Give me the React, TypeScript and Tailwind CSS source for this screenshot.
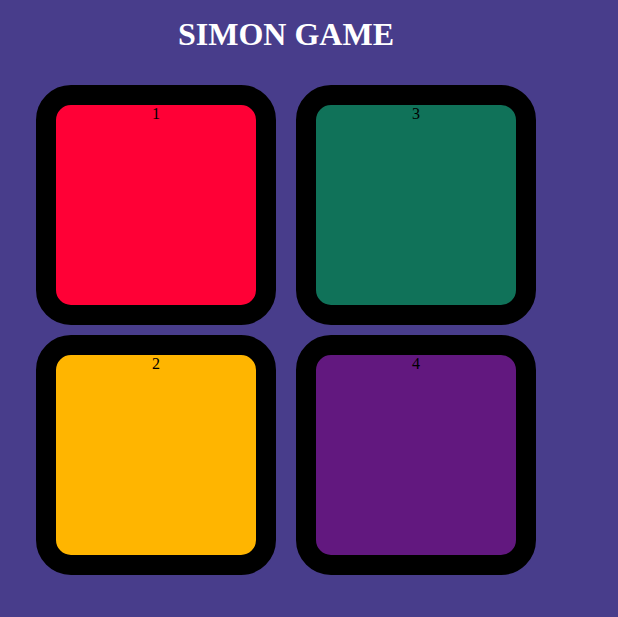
const pads = [
  { n: "1", color: "bg-[#ff0036]" },
  { n: "3", color: "bg-[#107259]" },
  { n: "2", color: "bg-[#ffb500]" },
  { n: "4", color: "bg-[#62187f]" },
];

const App = () => {
  return (
    <div className="min-h-screen w-full bg-[#483d8b] font-['Liberation_Serif',serif]">
      <div className="ml-[36px] w-[500px] pt-[18px]">
        <h1 className="text-center text-[32px] font-bold leading-none text-white">SIMON GAME</h1>
        <div className="mt-[35px] grid grid-cols-[240px_240px] gap-x-5 gap-y-2.5">
          {pads.map((p) => (
            <div
              key={p.n}
              className={`h-[240px] w-[240px] rounded-[35px] border-[20px] border-black text-center text-[16px] leading-[normal] text-black ${p.color}`}
            >
              {p.n}
            </div>
          ))}
        </div>
      </div>
    </div>
  );
};

export default App;
